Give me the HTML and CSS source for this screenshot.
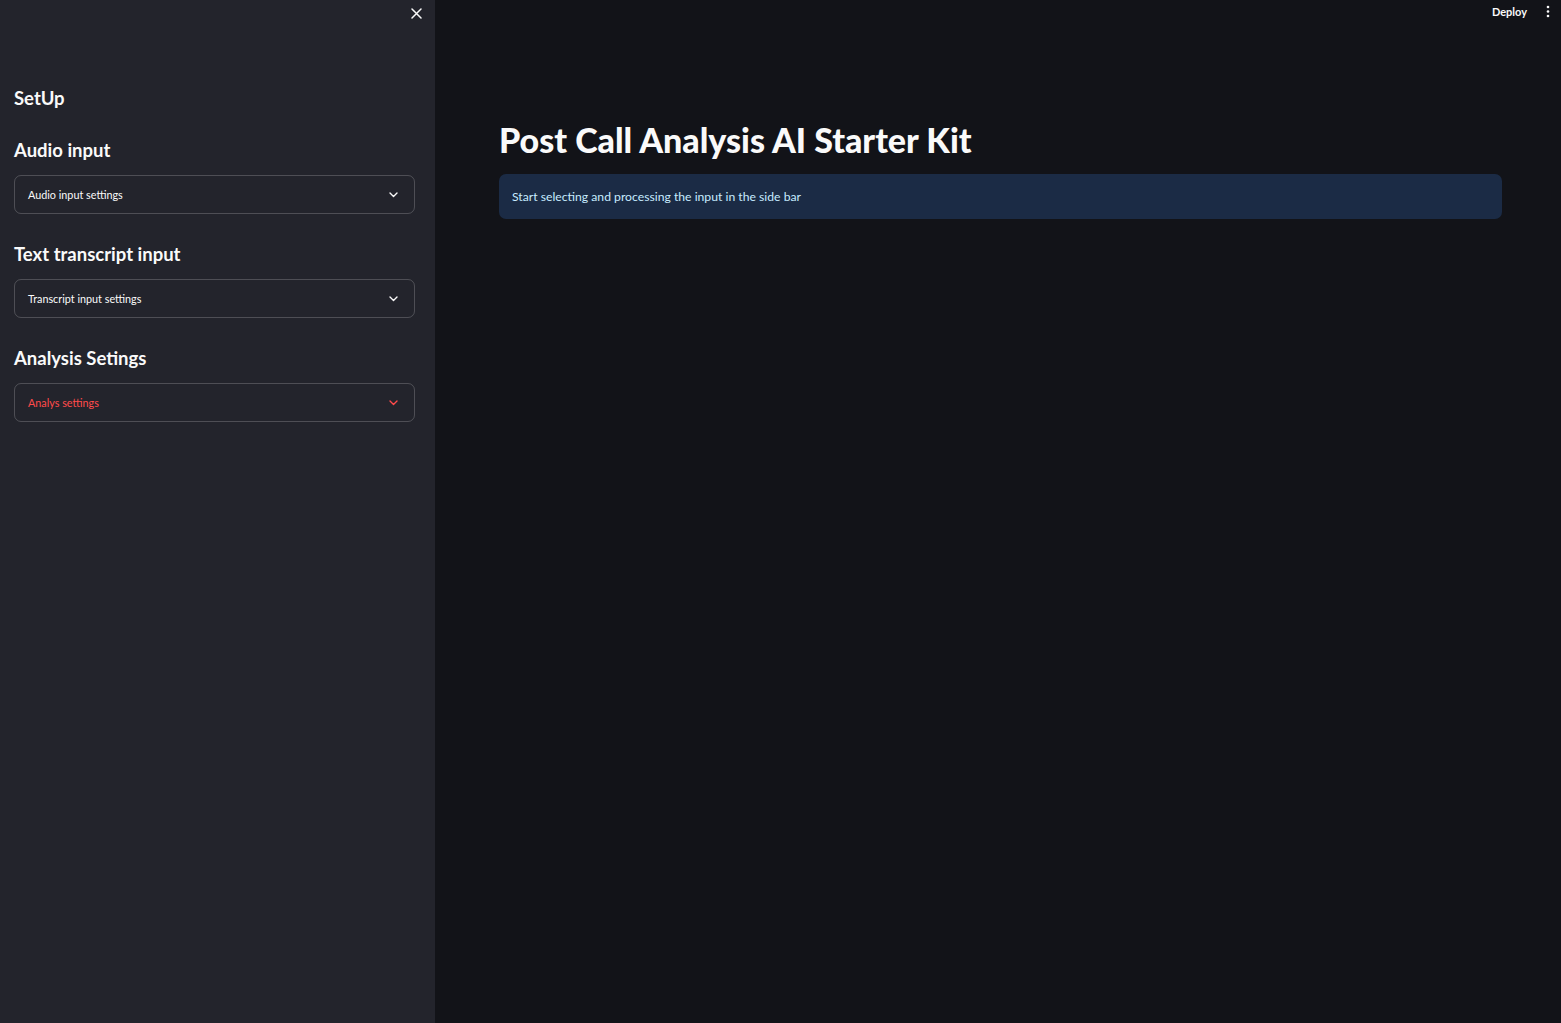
FILE: index.html
```html
<!DOCTYPE html>
<html lang="en">
<head>
<meta charset="utf-8">
<title>Post Call Analysis AI Starter Kit</title>
<link rel="stylesheet" href="styles.css">
</head>
<body>
<div class="app">
  <aside class="sidebar">
    <div class="sidebar-top">
      <button class="close-btn" aria-label="Close sidebar">
        <svg width="11" height="11" viewBox="0 0 11 11"><path d="M1 1 L10 10 M10 1 L1 10" stroke="#fafafa" stroke-width="1.5" stroke-linecap="round"/></svg>
      </button>
    </div>
    <div class="sidebar-content">
      <h2 class="side-title">SetUp</h2>
      <h3 class="side-heading">Audio input</h3>
      <div class="expander">
        <span class="exp-label">Audio input settings</span>
        <svg class="chev" width="9" height="6" viewBox="0 0 9 6"><path d="M1 1 L4.5 4.5 L8 1" fill="none" stroke="#fafafa" stroke-width="1.4" stroke-linecap="round" stroke-linejoin="round"/></svg>
      </div>
      <h3 class="side-heading">Text transcript input</h3>
      <div class="expander">
        <span class="exp-label">Transcript input settings</span>
        <svg class="chev" width="9" height="6" viewBox="0 0 9 6"><path d="M1 1 L4.5 4.5 L8 1" fill="none" stroke="#fafafa" stroke-width="1.4" stroke-linecap="round" stroke-linejoin="round"/></svg>
      </div>
      <h3 class="side-heading">Analysis Setings</h3>
      <div class="expander expander-error">
        <span class="exp-label">Analys settings</span>
        <svg class="chev" width="9" height="6" viewBox="0 0 9 6"><path d="M1 1 L4.5 4.5 L8 1" fill="none" stroke="#ff4b4b" stroke-width="1.4" stroke-linecap="round" stroke-linejoin="round"/></svg>
      </div>
    </div>
  </aside>
  <main class="main">
    <header class="topbar">
      <span class="deploy">Deploy</span>
      <svg class="kebab" width="4" height="13" viewBox="0 0 4 13"><circle cx="2" cy="2" r="1.3" fill="#fafafa"/><circle cx="2" cy="6.5" r="1.3" fill="#fafafa"/><circle cx="2" cy="11" r="1.3" fill="#fafafa"/></svg>
    </header>
    <section class="content">
      <h1 class="title">Post Call Analysis AI Starter Kit</h1>
      <div class="info">Start selecting and processing the input in the side bar</div>
    </section>
  </main>
</div>
</body>
</html>
```
FILE: styles.css
```css
* { box-sizing: border-box; }
html, body { margin: 0; padding: 0; height: 100%; }
body {
  font-family: "Lato", "Open Sans", sans-serif;
  color: #fafafa;
  background: #121318;
}
.app { display: flex; height: 1023px; }
.sidebar {
  width: 435px;
  flex: none;
  background: #23242c;
  padding: 0 20px 0 14px;
}
.sidebar-top {
  display: flex;
  justify-content: flex-end;
  height: 28px;
  padding-top: 8px;
}
.close-btn {
  background: none;
  border: none;
  padding: 0;
  width: 11px;
  height: 11px;
  margin-right: -7px;
  display: flex;
}
.sidebar-content { padding-top: 58px; }
.side-title {
  margin: 0;
  font-size: 18.5px;
  font-weight: 700;
  line-height: 24px;
}
.side-heading {
  margin: 28px 0 13px;
  font-size: 18.5px;
  font-weight: 700;
  line-height: 24px;
}
.expander {
  height: 39px;
  border: 1px solid rgba(250,250,250,0.2);
  border-radius: 7px;
  display: flex;
  align-items: center;
  justify-content: space-between;
  padding: 0 16px 0 13px;
}
.exp-label { font-size: 10.8px; font-weight: 400; padding-bottom: 1px; }
.expander-error { color: #ff4b4b; }
.main { flex: 1; display: flex; flex-direction: column; }
.topbar {
  height: 22px;
  display: flex;
  justify-content: flex-end;
  align-items: center;
  gap: 19px;
  padding: 0 11px 0 0;
}
.deploy { font-size: 11px; font-weight: 700; }
.content { padding: 96px 59px 0 64px; }
.title {
  margin: 0 0 12px;
  font-size: 34px;
  font-weight: 900;
  line-height: 44px;
}
.info {
  height: 45px;
  background: #1b2b45;
  border-radius: 7px;
  color: #c7ebff;
  font-size: 12.2px;
  display: flex;
  align-items: center;
  padding: 0 13px;
}
```
